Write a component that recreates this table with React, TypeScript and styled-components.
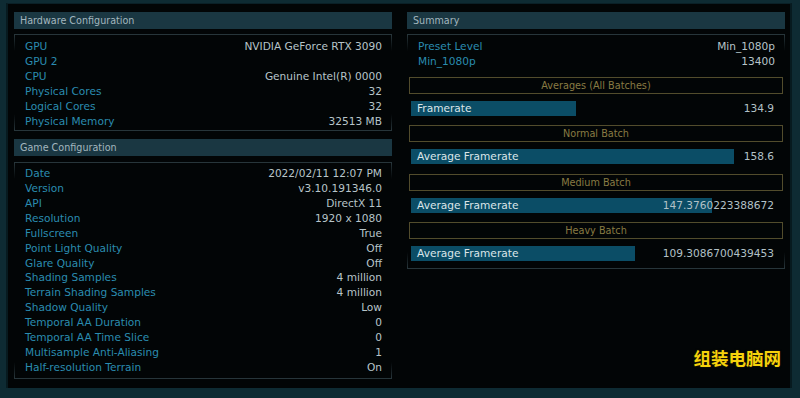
import React from "react";
import styled, { createGlobalStyle } from "styled-components";

const Global = createGlobalStyle`
  html, body { margin: 0; padding: 0; background: #020506; }
  * { box-sizing: border-box; }
`;

const Root = styled.div`
  position: relative;
  width: 800px;
  height: 398px;
  background: #0e2b33;
  padding: 3px 8px 10px 6px;
  font-family: "DejaVu Sans", "Noto Sans", sans-serif;
  font-size: 10.6px;
  overflow: hidden;
`;

const Frame = styled.div`
  height: 100%;
  background: #020506;
  border-left: 2px solid #071a1f;
  border-right: 2px solid #071a1f;
  border-top: 1px solid #0a2027;
  padding: 8px 5px 0 6px;
  display: grid;
  grid-template-columns: 378px 378px;
  column-gap: 15px;
  align-items: start;
`;

const Column = styled.div`
  display: flex;
  flex-direction: column;
`;

const Header = styled.div<{ $top?: number }>`
  height: 17px;
  line-height: 17px;
  padding-left: 6px;
  margin-top: ${(p) => p.$top ?? 0}px;
  background: #1a3742;
  color: #a3b6be;
  font-size: 9.6px;
`;

const lineColor = "#27353a";

const InfoBox = styled.div<{ $pt: number; $pb: number; $mt: number }>`
  margin-top: ${(p) => p.$mt}px;
  padding: ${(p) => p.$pt}px 0 ${(p) => p.$pb}px;
  border-top: 1px solid ${lineColor};
  border-bottom: 1px solid ${lineColor};
  background:
    linear-gradient(to bottom, ${lineColor}, transparent) left top / 1px 16px no-repeat,
    linear-gradient(to bottom, ${lineColor}, transparent) right top / 1px 16px no-repeat,
    linear-gradient(to top, ${lineColor}, transparent) left bottom / 1px 16px no-repeat,
    linear-gradient(to top, ${lineColor}, transparent) right bottom / 1px 16px no-repeat;
`;

const Row = styled.div<{ $h?: number }>`
  display: flex;
  justify-content: space-between;
  height: ${(p) => p.$h ?? 15}px;
  line-height: ${(p) => p.$h ?? 15}px;
  padding: 0 10px 0 11px;
  white-space: nowrap;
`;

const Label = styled.span`
  color: #2a8cb0;
`;

const Value = styled.span`
  color: #b7c4c9;
`;

const Group = styled.div<{ $mt: number }>`
  margin-top: ${(p) => p.$mt}px;
  display: flex;
  flex-direction: column;
  gap: 7px;
`;

const BatchTitle = styled.div`
  height: 17px;
  line-height: 15px;
  margin: 0 2px;
  border: 1px solid #524c2c;
  text-align: center;
  color: #887b43;
  font-size: 9.7px;
`;

const BarRow = styled.div`
  display: grid;
  height: 15px;
  & > * {
    grid-area: 1 / 1;
  }
`;

const Bar = styled.div<{ $w: number }>`
  width: ${(p) => p.$w}px;
  height: 15px;
  margin-left: 4px;
  padding-left: 6px;
  line-height: 15px;
  background: #0b4d66;
  color: #dbe5e9;
  white-space: nowrap;
`;

const BarValue = styled.span`
  justify-self: end;
  padding-right: 11px;
  line-height: 15px;
  color: #b2c1c6;
`;

const Watermark = styled.div`
  position: absolute;
  right: 19px;
  top: 349px;
  font-family: "Noto Sans CJK SC", sans-serif;
  font-weight: 700;
  font-size: 17.5px;
  line-height: 1;
  color: #f6d20c;
  text-shadow: 0 0 2px #2a2200;
`;

const hardware: [string, string][] = [
  ["GPU", "NVIDIA GeForce RTX 3090"],
  ["GPU 2", ""],
  ["CPU", "Genuine Intel(R) 0000"],
  ["Physical Cores", "32"],
  ["Logical Cores", "32"],
  ["Physical Memory", "32513 MB"],
];

const game: [string, string][] = [
  ["Date", "2022/02/11 12:07 PM"],
  ["Version", "v3.10.191346.0"],
  ["API", "DirectX 11"],
  ["Resolution", "1920 x 1080"],
  ["Fullscreen", "True"],
  ["Point Light Quality", "Off"],
  ["Glare Quality", "Off"],
  ["Shading Samples", "4 million"],
  ["Terrain Shading Samples", "4 million"],
  ["Shadow Quality", "Low"],
  ["Temporal AA Duration", "0"],
  ["Temporal AA Time Slice", "0"],
  ["Multisample Anti-Aliasing", "1"],
  ["Half-resolution Terrain", "On"],
];

const batches = [
  { title: "Averages (All Batches)", label: "Framerate", value: "134.9", w: 165 },
  { title: "Normal Batch", label: "Average Framerate", value: "158.6", w: 323 },
  { title: "Medium Batch", label: "Average Framerate", value: "147.3760223388672", w: 301 },
  { title: "Heavy Batch", label: "Average Framerate", value: "109.3086700439453", w: 224 },
];

export default function App() {
  return (
    <>
      <Global />
      <Root>
        <Frame>
          <Column>
            <Header>Hardware Configuration</Header>
            <InfoBox $mt={5} $pt={4} $pb={1}>
              {hardware.map(([k, v]) => (
                <Row key={k}>
                  <Label>{k}</Label>
                  <Value>{v}</Value>
                </Row>
              ))}
            </InfoBox>
            <Header $top={8}>Game Configuration</Header>
            <InfoBox $mt={6} $pt={3} $pb={3}>
              {game.map(([k, v]) => (
                <Row key={k} $h={14.93}>
                  <Label>{k}</Label>
                  <Value>{v}</Value>
                </Row>
              ))}
            </InfoBox>
          </Column>
          <Column>
            <Header>Summary</Header>
            <InfoBox $mt={5} $pt={4} $pb={7}>
              <Row>
                <Label>Preset Level</Label>
                <Value>Min_1080p</Value>
              </Row>
              <Row>
                <Label>Min_1080p</Label>
                <Value>13400</Value>
              </Row>
              {batches.map((b, i) => (
                <Group key={b.title} $mt={i === 0 ? 7.5 : 9.5}>
                  <BatchTitle>{b.title}</BatchTitle>
                  <BarRow>
                    <Bar $w={b.w}>{b.label}</Bar>
                    <BarValue>{b.value}</BarValue>
                  </BarRow>
                </Group>
              ))}
            </InfoBox>
          </Column>
        </Frame>
        <Watermark>组装电脑网</Watermark>
      </Root>
    </>
  );
}
